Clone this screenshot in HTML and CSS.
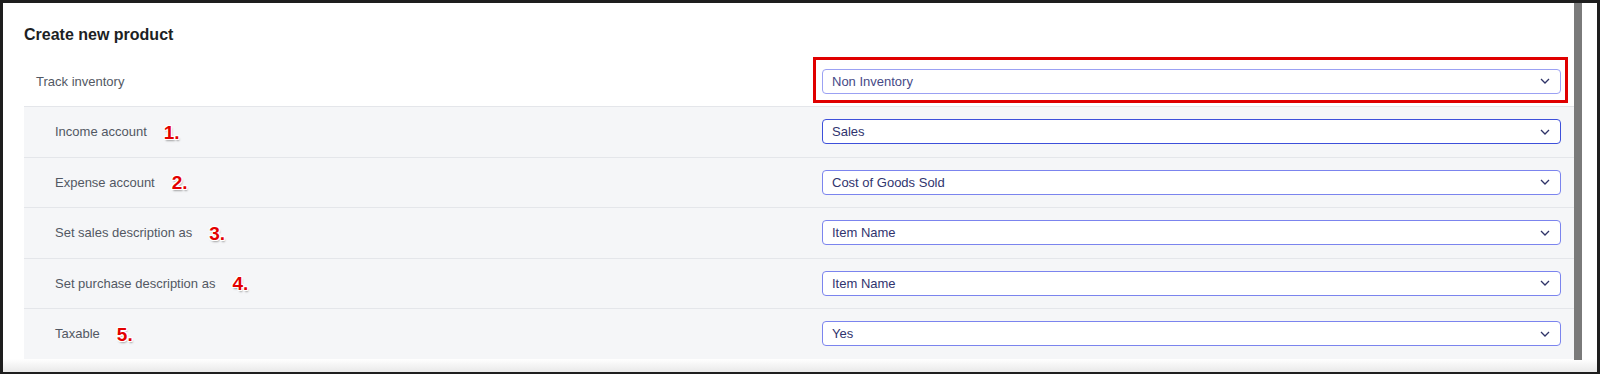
FILE: index.html
```html
<!DOCTYPE html>
<html lang="en">
<head>
<meta charset="utf-8">
<title>Create new product</title>
<link rel="stylesheet" href="styles.css">
</head>
<body>
<div class="frame">
  <div class="content">
    <h1 class="title">Create new product</h1>
    <div class="row row-main">
      <div class="label">Track inventory</div>
      <div class="field">
        <div class="select select-light"><span>Non Inventory</span><svg class="chev" width="10" height="6" viewBox="0 0 10 6"><polyline points="1,1 5,5 9,1" fill="none" stroke="#2f3468" stroke-width="1.3"/></svg></div>
        <div class="highlight"></div>
      </div>
    </div>
    <div class="row row-sub">
      <div class="label">Income account <span class="num">1.</span></div>
      <div class="field"><div class="select select-dark"><span>Sales</span><svg class="chev" width="10" height="6" viewBox="0 0 10 6"><polyline points="1,1 5,5 9,1" fill="none" stroke="#2f3468" stroke-width="1.3"/></svg></div></div>
    </div>
    <div class="row row-sub">
      <div class="label">Expense account <span class="num">2.</span></div>
      <div class="field"><div class="select"><span>Cost of Goods Sold</span><svg class="chev" width="10" height="6" viewBox="0 0 10 6"><polyline points="1,1 5,5 9,1" fill="none" stroke="#2f3468" stroke-width="1.3"/></svg></div></div>
    </div>
    <div class="row row-sub">
      <div class="label">Set sales description as <span class="num">3.</span></div>
      <div class="field"><div class="select"><span>Item Name</span><svg class="chev" width="10" height="6" viewBox="0 0 10 6"><polyline points="1,1 5,5 9,1" fill="none" stroke="#2f3468" stroke-width="1.3"/></svg></div></div>
    </div>
    <div class="row row-sub">
      <div class="label">Set purchase description as <span class="num">4.</span></div>
      <div class="field"><div class="select"><span>Item Name</span><svg class="chev" width="10" height="6" viewBox="0 0 10 6"><polyline points="1,1 5,5 9,1" fill="none" stroke="#2f3468" stroke-width="1.3"/></svg></div></div>
    </div>
    <div class="row row-sub">
      <div class="label">Taxable <span class="num">5.</span></div>
      <div class="field"><div class="select"><span>Yes</span><svg class="chev" width="10" height="6" viewBox="0 0 10 6"><polyline points="1,1 5,5 9,1" fill="none" stroke="#2f3468" stroke-width="1.3"/></svg></div></div>
    </div>
  </div>
  <div class="scrollbar"></div>
  <div class="gutter"></div>
</div>
</body>
</html>
```

FILE: styles.css
```css
html, body {
  margin: 0;
  padding: 0;
  background: #1e1e1e;
}

.frame {
  width: 1600px;
  height: 374px;
  box-sizing: border-box;
  border-top: 3px solid #1e1e1e;
  border-left: 3px solid #1e1e1e;
  border-right: 3px solid #1e1e1e;
  border-bottom: 2px solid #1e1e1e;
  background: linear-gradient(to bottom, #ffffff 0, #ffffff 356px, #e9e9e9 369px);
  display: flex;
  font-family: "Liberation Sans", Arial, sans-serif;
  overflow: hidden;
}

.content {
  flex: 1;
  padding: 22px 0 0 21px;
}

.title {
  margin: 0 0 11px;
  font-size: 16px;
  line-height: 20px;
  font-weight: 700;
  color: #1d1f24;
}

.row {
  height: 50.5px;
  box-sizing: border-box;
  display: flex;
  align-items: center;
  justify-content: space-between;
}

.row-main {
  height: 50px;
  padding-left: 12px;
  background: #ffffff;
}

.row-sub {
  padding-left: 31px;
  background: #f5f6f8;
  border-top: 1px solid #e4e6ea;
}

.label {
  font-size: 13px;
  color: #525863;
  display: flex;
  align-items: center;
}

.num {
  margin-left: 17px;
  font-size: 19px;
  font-weight: 700;
  color: #e30000;
  line-height: 18px;
  position: relative;
  top: 1px;
  text-shadow:
    1px 0 0 #fff, -1px 0 0 #fff, 0 1px 0 #fff, 0 -1px 0 #fff,
    1px 1px 0 #fff, -1px -1px 0 #fff, 1px -1px 0 #fff, -1px 1px 0 #fff,
    1px 2px 2px rgba(0, 0, 0, 0.35);
}

.field {
  position: relative;
  margin-right: 13px;
}

.select {
  width: 739px;
  height: 25px;
  box-sizing: border-box;
  border: 1px solid #7b84ee;
  border-radius: 4px;
  background: #ffffff;
  padding: 0 10px 0 9px;
  display: flex;
  align-items: center;
  justify-content: space-between;
  font-size: 13px;
  color: #30346e;
}

.select-light {
  border-color: #9ba1f3;
  color: #464a86;
}

.select-dark {
  border-color: #3e50da;
}

.chev {
  display: block;
}

.highlight {
  position: absolute;
  top: -12px;
  bottom: -9px;
  left: -9px;
  right: -7px;
  border: 3px solid #e00000;
  pointer-events: none;
}

.scrollbar {
  width: 8px;
  height: 357px;
  background: #7a7a7a;
}

.gutter {
  width: 15px;
}
```
